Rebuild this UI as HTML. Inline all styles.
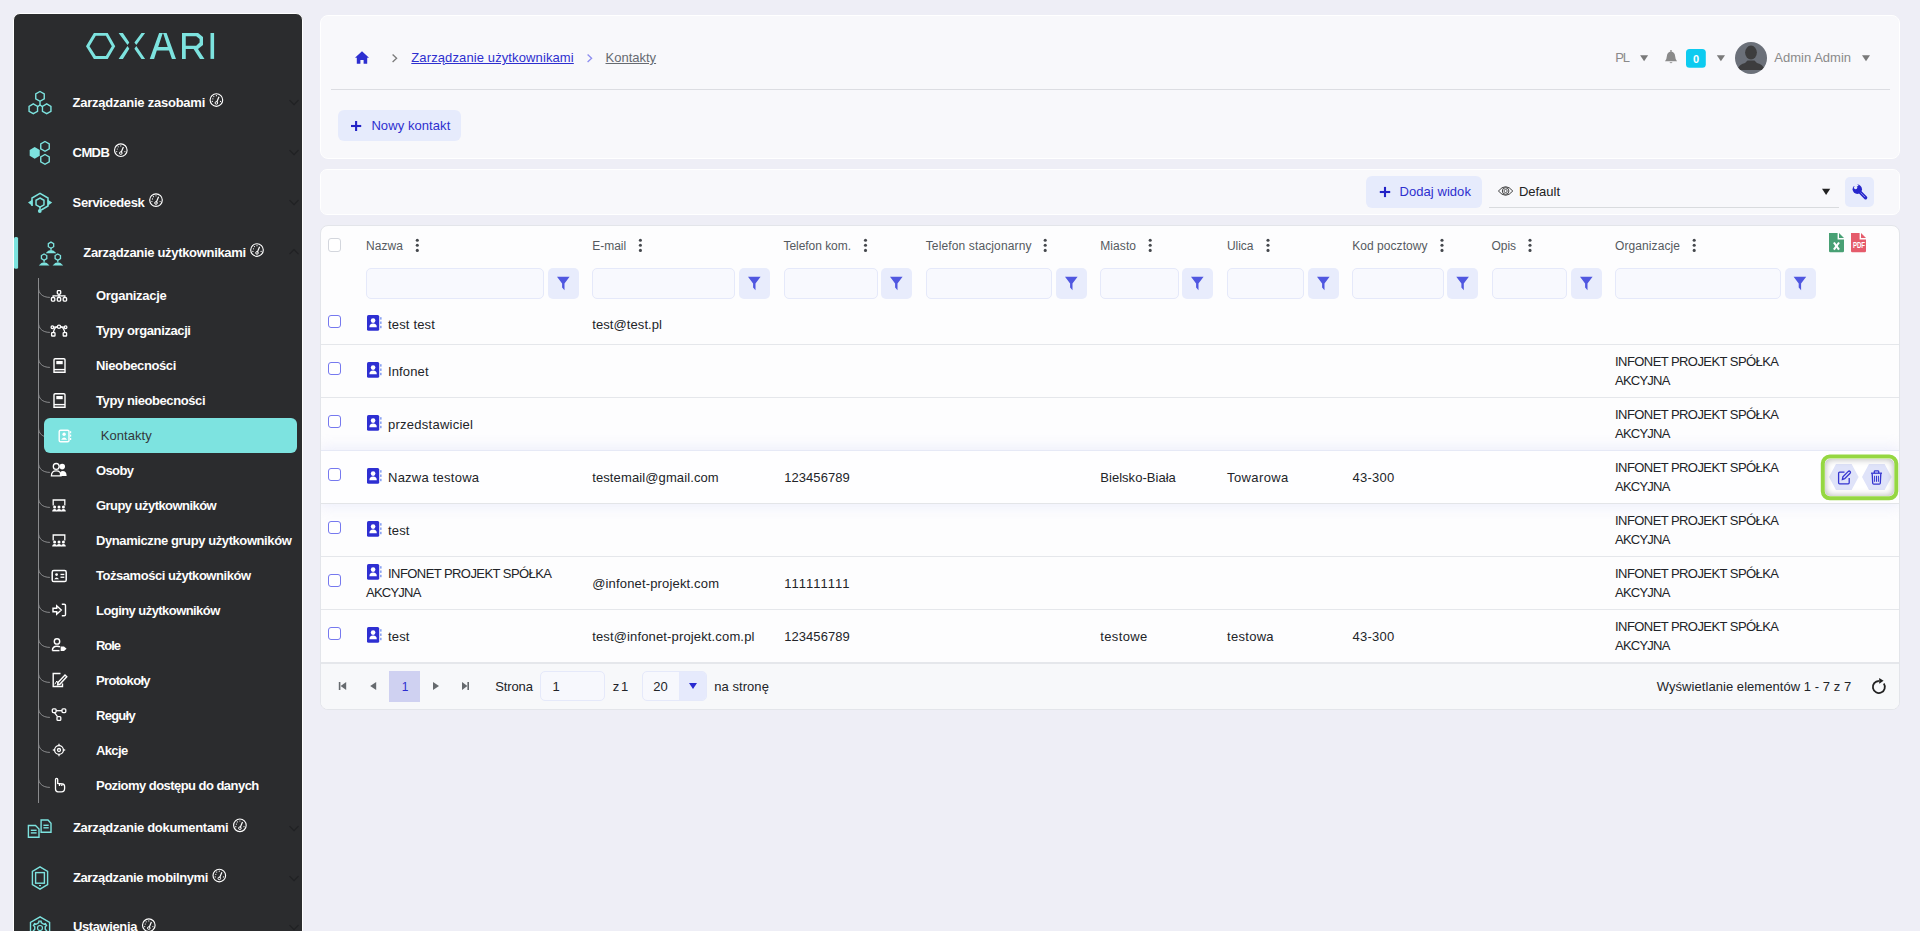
<!DOCTYPE html>
<html><head><meta charset="utf-8">
<style>
*{box-sizing:border-box;margin:0;padding:0}
html,body{width:1920px;height:931px;overflow:hidden;background:#eeeef6;font-family:"Liberation Sans",sans-serif;color:#222;position:relative}
.a{position:absolute}
.tx{position:absolute;white-space:pre;font-family:"Liberation Sans",sans-serif}
svg{position:absolute;overflow:visible}
.card{position:absolute;background:#f8f8fb;border-radius:8px;border:1px solid #fff}
.fin{position:absolute;top:268px;height:31px;background:#f8f9fe;border:1px solid #e5e9fa;border-radius:5px}
.fbtn{position:absolute;top:268px;width:31px;height:31px;background:#e8ecfc;border-radius:5px}
.cb{position:absolute;left:328px;width:13px;height:13px;border:1px solid #7679ef;border-radius:3px;background:#fff}
.dv{position:absolute;left:321px;width:1578px;height:1px;background:#e5e7eb}

</style></head><body>
<div class="a" style="left:13px;top:13px;width:290px;height:960px;background:#2b2c2e;border:1px solid #fff;border-radius:7px"></div>
<svg style="left:80px;top:25px" width="140" height="40" viewBox="0 0 140 40">
<path fill="#7de3df" fill-rule="evenodd" d="M13.9,7.9 L27.7,7.9 L35.2,21.2 L27.7,33.9 L13.9,33.9 L6,21.2 Z M15.8,10.8 L25.9,10.8 L31.8,21.2 L25.9,31 L15.8,31 L9.5,21.2 Z"/>
<path fill="#7de3df" d="M38.6,7.9 L42.9,7.9 L49.3,17.4 L47.5,20 Z M47.5,21 L49.3,23.7 L42.9,33.9 L38.6,33.9 Z M61.5,7.9 L65.1,7.9 L56.3,20 L54.4,17.4 Z M56.3,21 L65.1,33.9 L61.5,33.9 L54.4,23.7 Z"/>
<path fill="#7de3df" fill-rule="evenodd" d="M69.75,33.9 L79.1,8 L86.6,8 L96,33.9 L91.9,33.9 L89,25.4 L76.8,25.4 L74.1,33.9 Z M78.2,21.9 L87.7,21.9 L83.3,8.6 L82.6,8.6 Z"/>
<path fill="#7de3df" fill-rule="evenodd" d="M102,8 L118.1,8 L123,11.9 L123,20 L118,24.1 L124.5,33.9 L120,33.9 L113.6,24.1 L105.75,24.1 L105.75,33.9 L102,33.9 Z M105.75,11.2 L116.2,11.2 L119.6,13.9 L119.6,17.6 L116.2,20.75 L105.75,20.75 Z"/>
<rect x="130.5" y="8" width="3.6" height="25.9" fill="#7de3df"/>
</svg>
<svg style="left:0;top:0" width="80" height="931" viewBox="0 0 80 931">
<g fill="none" stroke="#7de3df" stroke-width="1.4">
<polygon points="40.00,91.50 44.24,93.95 44.24,98.85 40.00,101.30 35.76,98.85 35.76,93.95"/>
<polygon points="33.30,103.90 37.54,106.35 37.54,111.25 33.30,113.70 29.06,111.25 29.06,106.35"/>
<polygon points="46.70,103.90 50.94,106.35 50.94,111.25 46.70,113.70 42.46,111.25 42.46,106.35"/>
<line x1="40" y1="101.3" x2="40" y2="105"/><polyline points="37.6,106.6 40,105 42.4,106.6"/>
<polygon points="45.00,141.50 49.24,143.95 49.24,148.85 45.00,151.30 40.76,148.85 40.76,143.95"/>
<polygon points="45.00,154.50 49.24,156.95 49.24,161.85 45.00,164.30 40.76,161.85 40.76,156.95"/>
</g>
<polygon fill="#7de3df" points="34.70,147.10 39.72,150.00 39.72,155.80 34.70,158.70 29.68,155.80 29.68,150.00"/>
<g fill="none" stroke="#7de3df" stroke-width="1.5">
<polyline points="32,206 32,198 40,193.4 48,198 48,206 41.2,210"/><line x1="40" y1="207" x2="40" y2="209.5"/>
<polygon points="40.00,198.00 43.98,200.30 43.98,204.90 40.00,207.20 36.02,204.90 36.02,200.30"/>
</g>
<g fill="#7de3df">
<path d="M28,202.6 L32.5,199.5 L32.5,206 Z"/>
<path d="M52.2,202.6 L47.5,199.5 L47.5,206 Z"/>
<circle cx="39.8" cy="211" r="1.9"/>
</g>
<g fill="none" stroke="#7de3df" stroke-width="1.3">
<polygon points="51.00,242.10 53.68,243.65 53.68,246.75 51.00,248.30 48.32,246.75 48.32,243.65"/>
<polygon points="44.10,254.00 46.78,255.55 46.78,258.65 44.10,260.20 41.42,258.65 41.42,255.55"/>
<polygon points="57.80,254.00 60.48,255.55 60.48,258.65 57.80,260.20 55.12,258.65 55.12,255.55"/>
</g>
<g fill="#7de3df">
<path d="M45.6,253.2 Q51,246.9 56.4,253.2 Z"/>
<path d="M38.8,265.4 Q44.1,259.1 49.5,265.4 Z"/>
<path d="M52.6,265.4 Q57.8,259.1 63.2,265.4 Z"/>
<rect x="50.4" y="248" width="1.2" height="2"/>
<rect x="43.5" y="260" width="1.2" height="2"/>
<rect x="57.2" y="260" width="1.2" height="2"/>
</g>
<rect x="14" y="236.9" width="4.1" height="31.8" rx="1.5" fill="#7de3df"/>
<!-- documents -->
<g fill="none" stroke="#7de3df" stroke-width="1.4">
<path d="M28.4,825.5 L35.5,825.5 L39,829 L39,837.3 L28.4,837.3 Z"/>
<path d="M41.1,820 L48,820 L51,823.3 L51,832.3 L41.1,832.3 Z"/>
<line x1="30.8" y1="830.3" x2="36.6" y2="830.3"/>
<line x1="30.8" y1="832.9" x2="36.6" y2="832.9"/>
<line x1="43.4" y1="825.3" x2="48.7" y2="825.3"/>
<line x1="43.4" y1="827.8" x2="48.7" y2="827.8"/>
</g>
<!-- mobile -->
<g fill="none" stroke="#7de3df" stroke-width="1.4">
<polygon points="40,866.8 47.6,871.3 47.6,884.6 40,889.1 32.4,884.6 32.4,871.3"/>
<rect x="35.6" y="872.6" width="8.8" height="10.6"/>
</g>
<rect x="39" y="885" width="2" height="1.2" fill="#7de3df"/>
<!-- settings -->
<g fill="none" stroke="#7de3df" stroke-width="1.4">
<polygon points="40.1,916.8 49.6,922.4 49.6,934 40.1,940 30.5,934 30.5,922.4"/>
<circle cx="40" cy="928" r="2.5" stroke-width="1.2"/><polygon points="38.01,923.09 38.74,922.54 38.90,921.09 41.10,921.09 41.26,922.54 41.99,923.09 43.26,923.82 44.10,924.18 45.44,923.59 46.54,925.49 45.36,926.36 45.25,927.26 45.25,928.74 45.36,929.64 46.54,930.51 45.44,932.41 44.10,931.82 43.26,932.18 41.99,932.91 41.26,933.46 41.10,934.91 38.90,934.91 38.74,933.46 38.01,932.91 36.74,932.18 35.90,931.82 34.56,932.41 33.46,930.51 34.64,929.64 34.75,928.74 34.75,927.26 34.64,926.36 33.46,925.49 34.56,923.59 35.90,924.18 36.74,923.82"/>
</g>
</svg>
<svg style="left:0;top:0" width="310" height="931" viewBox="0 0 310 931"><g transform="translate(216.4,100)" fill="none" stroke="#fff">
<circle r="6.3" stroke-width="1.15"/>
<line x1="0.3" y1="2.2" x2="2.6" y2="-3.3" stroke-width="1.2"/>
<circle cx="0" cy="2.9" r="1.3" stroke-width="1"/>
<circle cx="-3.5" cy="-1.2" r="0.6" fill="#fff" stroke="none"/>
<circle cx="-2.6" cy="-3.4" r="0.6" fill="#fff" stroke="none"/>
<circle cx="0" cy="-4.3" r="0.6" fill="#fff" stroke="none"/>
<circle cx="-4.1" cy="1.4" r="0.6" fill="#fff" stroke="none"/>
<circle cx="4.1" cy="1.4" r="0.6" fill="#fff" stroke="none"/>
</g><g transform="translate(120.8,150.2)" fill="none" stroke="#fff">
<circle r="6.3" stroke-width="1.15"/>
<line x1="0.3" y1="2.2" x2="2.6" y2="-3.3" stroke-width="1.2"/>
<circle cx="0" cy="2.9" r="1.3" stroke-width="1"/>
<circle cx="-3.5" cy="-1.2" r="0.6" fill="#fff" stroke="none"/>
<circle cx="-2.6" cy="-3.4" r="0.6" fill="#fff" stroke="none"/>
<circle cx="0" cy="-4.3" r="0.6" fill="#fff" stroke="none"/>
<circle cx="-4.1" cy="1.4" r="0.6" fill="#fff" stroke="none"/>
<circle cx="4.1" cy="1.4" r="0.6" fill="#fff" stroke="none"/>
</g><g transform="translate(156,200.1)" fill="none" stroke="#fff">
<circle r="6.3" stroke-width="1.15"/>
<line x1="0.3" y1="2.2" x2="2.6" y2="-3.3" stroke-width="1.2"/>
<circle cx="0" cy="2.9" r="1.3" stroke-width="1"/>
<circle cx="-3.5" cy="-1.2" r="0.6" fill="#fff" stroke="none"/>
<circle cx="-2.6" cy="-3.4" r="0.6" fill="#fff" stroke="none"/>
<circle cx="0" cy="-4.3" r="0.6" fill="#fff" stroke="none"/>
<circle cx="-4.1" cy="1.4" r="0.6" fill="#fff" stroke="none"/>
<circle cx="4.1" cy="1.4" r="0.6" fill="#fff" stroke="none"/>
</g><g transform="translate(257,250)" fill="none" stroke="#fff">
<circle r="6.3" stroke-width="1.15"/>
<line x1="0.3" y1="2.2" x2="2.6" y2="-3.3" stroke-width="1.2"/>
<circle cx="0" cy="2.9" r="1.3" stroke-width="1"/>
<circle cx="-3.5" cy="-1.2" r="0.6" fill="#fff" stroke="none"/>
<circle cx="-2.6" cy="-3.4" r="0.6" fill="#fff" stroke="none"/>
<circle cx="0" cy="-4.3" r="0.6" fill="#fff" stroke="none"/>
<circle cx="-4.1" cy="1.4" r="0.6" fill="#fff" stroke="none"/>
<circle cx="4.1" cy="1.4" r="0.6" fill="#fff" stroke="none"/>
</g><g transform="translate(239.9,825.3)" fill="none" stroke="#fff">
<circle r="6.3" stroke-width="1.15"/>
<line x1="0.3" y1="2.2" x2="2.6" y2="-3.3" stroke-width="1.2"/>
<circle cx="0" cy="2.9" r="1.3" stroke-width="1"/>
<circle cx="-3.5" cy="-1.2" r="0.6" fill="#fff" stroke="none"/>
<circle cx="-2.6" cy="-3.4" r="0.6" fill="#fff" stroke="none"/>
<circle cx="0" cy="-4.3" r="0.6" fill="#fff" stroke="none"/>
<circle cx="-4.1" cy="1.4" r="0.6" fill="#fff" stroke="none"/>
<circle cx="4.1" cy="1.4" r="0.6" fill="#fff" stroke="none"/>
</g><g transform="translate(219.3,875.5)" fill="none" stroke="#fff">
<circle r="6.3" stroke-width="1.15"/>
<line x1="0.3" y1="2.2" x2="2.6" y2="-3.3" stroke-width="1.2"/>
<circle cx="0" cy="2.9" r="1.3" stroke-width="1"/>
<circle cx="-3.5" cy="-1.2" r="0.6" fill="#fff" stroke="none"/>
<circle cx="-2.6" cy="-3.4" r="0.6" fill="#fff" stroke="none"/>
<circle cx="0" cy="-4.3" r="0.6" fill="#fff" stroke="none"/>
<circle cx="-4.1" cy="1.4" r="0.6" fill="#fff" stroke="none"/>
<circle cx="4.1" cy="1.4" r="0.6" fill="#fff" stroke="none"/>
</g><g transform="translate(148.8,925.2)" fill="none" stroke="#fff">
<circle r="6.3" stroke-width="1.15"/>
<line x1="0.3" y1="2.2" x2="2.6" y2="-3.3" stroke-width="1.2"/>
<circle cx="0" cy="2.9" r="1.3" stroke-width="1"/>
<circle cx="-3.5" cy="-1.2" r="0.6" fill="#fff" stroke="none"/>
<circle cx="-2.6" cy="-3.4" r="0.6" fill="#fff" stroke="none"/>
<circle cx="0" cy="-4.3" r="0.6" fill="#fff" stroke="none"/>
<circle cx="-4.1" cy="1.4" r="0.6" fill="#fff" stroke="none"/>
<circle cx="4.1" cy="1.4" r="0.6" fill="#fff" stroke="none"/>
</g><polyline points="289.5,100.19999999999999 294,104.69999999999999 298.5,100.19999999999999" fill="none" stroke="#202123" stroke-width="1.2"/><polyline points="289.5,150.2 294,154.7 298.5,150.2" fill="none" stroke="#202123" stroke-width="1.2"/><polyline points="289.5,200.2 294,204.7 298.5,200.2" fill="none" stroke="#202123" stroke-width="1.2"/><polyline points="289.5,826.2 294,830.7 298.5,826.2" fill="none" stroke="#202123" stroke-width="1.2"/><polyline points="289.5,876.2 294,880.7 298.5,876.2" fill="none" stroke="#202123" stroke-width="1.2"/><polyline points="289.5,925.2 294,929.7 298.5,925.2" fill="none" stroke="#202123" stroke-width="1.2"/><polyline points="289.5,254.2 294,249.7 298.5,254.2" fill="none" stroke="#202123" stroke-width="1.2"/></svg>
<svg style="left:0;top:0" width="310" height="931" viewBox="0 0 310 931"><line x1="38.5" y1="278" x2="38.5" y2="803" stroke="#8a8b8d" stroke-width="1"/><path d="M38.5,287.8 C38.5,293 42,297.4 49.9,297.4" fill="none" stroke="#8a8b8d" stroke-width="1"/><path d="M38.5,322.8 C38.5,328 42,332.4 49.9,332.4" fill="none" stroke="#8a8b8d" stroke-width="1"/><path d="M38.5,357.8 C38.5,363 42,367.4 49.9,367.4" fill="none" stroke="#8a8b8d" stroke-width="1"/><path d="M38.5,392.8 C38.5,398 42,402.4 49.9,402.4" fill="none" stroke="#8a8b8d" stroke-width="1"/><path d="M38.5,427.8 C38.5,433 42,437.4 49.9,437.4" fill="none" stroke="#8a8b8d" stroke-width="1"/><path d="M38.5,462.8 C38.5,468 42,472.4 49.9,472.4" fill="none" stroke="#8a8b8d" stroke-width="1"/><path d="M38.5,497.8 C38.5,503 42,507.4 49.9,507.4" fill="none" stroke="#8a8b8d" stroke-width="1"/><path d="M38.5,532.8 C38.5,538 42,542.4 49.9,542.4" fill="none" stroke="#8a8b8d" stroke-width="1"/><path d="M38.5,567.8 C38.5,573 42,577.4 49.9,577.4" fill="none" stroke="#8a8b8d" stroke-width="1"/><path d="M38.5,602.8 C38.5,608 42,612.4 49.9,612.4" fill="none" stroke="#8a8b8d" stroke-width="1"/><path d="M38.5,637.8 C38.5,643 42,647.4 49.9,647.4" fill="none" stroke="#8a8b8d" stroke-width="1"/><path d="M38.5,672.8 C38.5,678 42,682.4 49.9,682.4" fill="none" stroke="#8a8b8d" stroke-width="1"/><path d="M38.5,707.8 C38.5,713 42,717.4 49.9,717.4" fill="none" stroke="#8a8b8d" stroke-width="1"/><path d="M38.5,742.8 C38.5,748 42,752.4 49.9,752.4" fill="none" stroke="#8a8b8d" stroke-width="1"/><path d="M38.5,777.8 C38.5,783 42,787.4 49.9,787.4" fill="none" stroke="#8a8b8d" stroke-width="1"/><g fill="none" stroke="#ffffff" stroke-width="1.3">
<rect x="57.3" y="290.7" width="3.4" height="3.4" rx="0.8"/>
<rect x="51.4" y="297.7" width="3.4" height="3.4" rx="0.8"/>
<rect x="57.3" y="297.7" width="3.4" height="3.4" rx="0.8"/>
<rect x="63.2" y="297.7" width="3.4" height="3.4" rx="0.8"/>
<polyline points="53.1,297.7 53.1,295.9 64.9,295.9 64.9,297.7"/>
<line x1="59" y1="294.1" x2="59" y2="297.7"/>
</g><g fill="none" stroke="#ffffff" stroke-width="1.3">
<rect x="51.6" y="332.6" width="3.4" height="3.4" rx="0.6"/>
<rect x="63.2" y="332.6" width="3.4" height="3.4" rx="0.6"/>
<circle cx="52.4" cy="327.2" r="1.3"/>
<circle cx="59" cy="326.8" r="1.6"/>
<circle cx="65.6" cy="327.2" r="1.3"/>
<path d="M53.3,332.6 Q54.5,327 57.5,326.9"/>
<path d="M64.9,332.6 Q63.5,327 60.5,326.9"/>
<line x1="53.7" y1="327.1" x2="57.4" y2="326.9"/>
<line x1="60.6" y1="326.9" x2="64.3" y2="327.1"/>
</g><g fill="none" stroke="#ffffff" stroke-width="1.4">
<path d="M54,372.3 L54,359.8 Q54,358.7 55.1,358.7 L63.9,358.7 Q65,358.7 65,359.8 L65,372.3 Z"/>
<line x1="54" y1="369.6" x2="65" y2="369.6"/>
</g>
<rect x="56.3" y="361" width="6.4" height="3.2" fill="#ffffff"/><g fill="none" stroke="#ffffff" stroke-width="1.4">
<path d="M54,407.3 L54,394.8 Q54,393.7 55.1,393.7 L63.9,393.7 Q65,393.7 65,394.8 L65,407.3 Z"/>
<line x1="54" y1="404.6" x2="65" y2="404.6"/>
</g>
<rect x="56.3" y="396" width="6.4" height="3.2" fill="#ffffff"/><g fill="none" stroke="#ffffff" stroke-width="1.4">
<rect x="59.2" y="430.2" width="9.8" height="11.6" rx="1.4"/>
</g>
<g fill="#ffffff"><circle cx="64.1" cy="434.2" r="1.7"/><path d="M61.1,439.7 Q64.1,435.2 67.1,439.7 Z"/>
<rect x="70" y="431.2" width="1.2" height="2"/><rect x="70" y="434.6" width="1.2" height="2"/><rect x="70" y="438" width="1.2" height="2"/></g><g fill="#ffffff">
<circle cx="56.2" cy="466.4" r="2.9" fill="none" stroke="#ffffff" stroke-width="1.3"/>
<circle cx="62.2" cy="466.6" r="2.8"/>
<path d="M51.4,475.9 Q51.4,470.8 56.2,470.8 Q61,470.8 61,475.9 Z" fill="none" stroke="#ffffff" stroke-width="1.3"/>
<path d="M59.8,476 Q59.6,471 62.6,471 Q66.6,471 66.6,476 Z"/>
</g><g fill="none" stroke="#ffffff" stroke-width="1.3"><polyline points="53.2,505.5 53.2,500 64.8,500 64.8,505.5"/></g>
<g fill="#ffffff">
<circle cx="54.6" cy="506.9" r="1.5"/><circle cx="59" cy="506.9" r="1.5"/><circle cx="63.4" cy="506.9" r="1.5"/>
<path d="M52.2,511.6 Q52.2,508.9 54.6,508.9 Q57,508.9 57,511.6 Z"/>
<path d="M56.6,511.6 Q56.6,508.9 59,508.9 Q61.4,508.9 61.4,511.6 Z"/>
<path d="M61,511.6 Q61,508.9 63.4,508.9 Q65.8,508.9 65.8,511.6 Z"/>
</g><g fill="none" stroke="#ffffff" stroke-width="1.3"><polyline points="53.2,540.5 53.2,535 64.8,535 64.8,540.5"/></g>
<g fill="#ffffff">
<circle cx="54.6" cy="541.9" r="1.5"/><circle cx="59" cy="541.9" r="1.5"/><circle cx="63.4" cy="541.9" r="1.5"/>
<path d="M52.2,546.6 Q52.2,543.9 54.6,543.9 Q57,543.9 57,546.6 Z"/>
<path d="M56.6,546.6 Q56.6,543.9 59,543.9 Q61.4,543.9 61.4,546.6 Z"/>
<path d="M61,546.6 Q61,543.9 63.4,543.9 Q65.8,543.9 65.8,546.6 Z"/>
</g><rect x="52.2" y="570.6" width="14" height="11" rx="1.6" fill="none" stroke="#ffffff" stroke-width="1.5"/>
<g fill="#ffffff"><circle cx="56.6" cy="574.6" r="1.4"/><path d="M54.2,579.2 Q56.6,575.9 59,579.2 Z"/>
<rect x="60.5" y="573.8" width="3.8" height="1.3"/><rect x="60.5" y="576.6" width="3.8" height="1.3"/></g><g fill="none" stroke="#ffffff" stroke-width="1.4">
<path d="M61.8,604.3 L64.2,604.3 Q65.5,604.3 65.5,605.6 L65.5,614.4 Q65.5,615.7 64.2,615.7 L61.8,615.7"/>
<path d="M53,608.3 L56.7,608.3 L56.7,605.8 L61.3,610 L56.7,614.2 L56.7,611.7 L53,611.7 Z"/>
</g><g fill="none" stroke="#ffffff" stroke-width="1.4">
<circle cx="57" cy="641.4" r="2.7"/>
<path d="M52.4,650.6 Q52.4,646.2 57,646.2 Q59,646.2 60,646.8"/>
</g>
<path d="M60.6,646.6 L64,646.6 L66.6,648.8 L64,651 L60.6,651 Z" fill="#ffffff"/>
<line x1="52.3" y1="650.6" x2="59.5" y2="650.6" stroke="#ffffff" stroke-width="1.4"/><g fill="none" stroke="#ffffff" stroke-width="1.4">
<path d="M60.5,673.5 L53.2,673.5 L53.2,686.5 L62.5,686.5 L62.5,683.5"/>
<path d="M58,682.5 L65,675 L66.8,676.8 L59.8,684.3 L57.6,684.8 Z"/>
</g>
<path d="M54.8,684.3 L56.8,681 L58,683.2" fill="none" stroke="#ffffff" stroke-width="1"/><g fill="none" stroke="#ffffff" stroke-width="1.3">
<rect x="52.3" y="708.8" width="3.8" height="3.8" rx="1"/>
<rect x="62" y="708.8" width="3.8" height="3.8" rx="1"/>
<rect x="57" y="716.6" width="3.8" height="3.8" rx="1"/>
<line x1="56.1" y1="710.7" x2="62" y2="710.7"/>
<line x1="54.5" y1="712.6" x2="57.5" y2="716.6"/>
</g><g fill="none" stroke="#ffffff" stroke-width="1.3">
<circle cx="59" cy="750" r="4.4"/>
<circle cx="59" cy="750" r="1.5"/>
<line x1="59" y1="743.8" x2="59" y2="745.6"/><line x1="59" y1="754.4" x2="59" y2="756.2"/>
<line x1="52.8" y1="750" x2="54.6" y2="750"/><line x1="63.4" y1="750" x2="65.2" y2="750"/>
</g><g fill="none" stroke="#ffffff" stroke-width="1.3">
<path d="M55.5,789 L55.5,779.6 Q55.5,778.4 56.6,778.4 Q57.7,778.4 57.7,779.6 L57.7,783.5 L62.5,784 Q64.6,784.3 64.6,786.5 L64.6,788.5 Q64.6,791.8 61.4,791.8 L58,791.8 Q55.5,791.8 55.5,789 Z"/>
<line x1="59.5" y1="784" x2="59.5" y2="786"/><line x1="61.8" y1="784.4" x2="61.8" y2="786"/>
</g></svg>
<div class="a" style="left:44px;top:418px;width:253px;height:35px;background:#7de3e0;border-radius:6px"></div>
<svg style="left:0;top:0" width="310" height="931" viewBox="0 0 310 931">
<g fill="none" stroke="#ffffff" stroke-width="1.4"><rect x="59.2" y="430.2" width="9.8" height="11.6" rx="1.4"/></g>
<g fill="#ffffff"><circle cx="64.1" cy="434.2" r="1.7"/><path d="M61.1,439.7 Q64.1,435.2 67.1,439.7 Z"/>
<rect x="70" y="431.2" width="1.2" height="2"/><rect x="70" y="434.6" width="1.2" height="2"/><rect x="70" y="438" width="1.2" height="2"/></g>
</svg>
<div class="card" style="left:320px;top:15px;width:1580px;height:144px"></div>
<div class="a" style="left:331px;top:89px;width:1559px;height:1px;background:#dcdde2"></div>
<div class="a" style="left:338px;top:110px;width:123px;height:31px;background:#e6ebfc;border-radius:6px"></div>
<div class="card" style="left:320px;top:169px;width:1580px;height:46px;border-radius:7px"></div>
<div class="a" style="left:1366px;top:176px;width:116px;height:32px;background:#e6ebfc;border-radius:6px"></div>
<div class="a" style="left:1489px;top:207px;width:350px;height:1px;background:#d9dbde"></div>
<div class="a" style="left:1845px;top:177px;width:29px;height:30px;background:#e6ebfc;border-radius:5px"></div>
<svg style="left:0;top:0" width="1920" height="240" viewBox="0 0 1920 240">
<path fill="#2d2fd0" d="M355,57.8 L362,51.2 L369,57.8 L367.2,57.8 L367.2,63.8 L363.6,63.8 L363.6,60 L360.4,60 L360.4,63.8 L356.8,63.8 L356.8,57.8 Z"/>
<polyline points="392.6,54.6 396.6,58.3 392.6,62" fill="none" stroke="#7a7a7a" stroke-width="1.3"/>
<polyline points="587.6,54.6 591.6,58.3 587.6,62" fill="none" stroke="#8c8cf0" stroke-width="1.3"/>
<g stroke="#2222c6" stroke-width="2.1"><line x1="351" y1="126" x2="361.2" y2="126"/><line x1="356.1" y1="121" x2="356.1" y2="131"/></g>
<g fill="#7a7a7a"><path d="M1640.1,55.2 L1648.1,55.2 L1644.1,61.2 Z"/><path d="M1716.8,55.2 L1725,55.2 L1720.9,61.2 Z"/><path d="M1862,55.2 L1870,55.2 L1866,61.2 Z"/></g>
<path fill="#8a8a8a" d="M1665,61.3 Q1666.6,59.8 1666.8,56.4 Q1667.1,52.3 1671,51.6 Q1674.9,52.3 1675.2,56.4 Q1675.4,59.8 1677,61.3 Z M1669.4,62.2 Q1671,64.2 1672.6,62.2 Z"/>
<circle cx="1671" cy="50.9" r="0.9" fill="#8a8a8a"/>
<rect x="1686" y="49.1" width="19.8" height="18.7" rx="3.5" fill="#0dcbf0"/>
<defs><clipPath id="av"><circle cx="1751" cy="58" r="16"/></clipPath></defs>
<circle cx="1751" cy="58" r="16" fill="#6b7079"/>
<g clip-path="url(#av)" fill="#3d3d3e"><ellipse cx="1751" cy="52.6" rx="5.9" ry="7"/><path d="M1737.5,70 Q1738.5,64.5 1745,63 L1747.5,60.5 L1754.5,60.5 L1757,63 Q1763.5,64.5 1764.5,70 Z"/></g>
<g stroke="#2222c6" stroke-width="2.1"><line x1="1379.8" y1="192" x2="1390.2" y2="192"/><line x1="1385" y1="186.9" x2="1385" y2="197.1"/></g>
<path d="M1498.4,191 Q1505.6,182.4 1512.8,191 Q1505.6,199.6 1498.4,191 Z" fill="none" stroke="#3a3a3a" stroke-width="0.95"/>
<circle cx="1505.6" cy="191" r="3.3" fill="none" stroke="#3a3a3a" stroke-width="0.95"/><circle cx="1505.6" cy="191" r="1.6" fill="none" stroke="#3a3a3a" stroke-width="0.8"/>
<path d="M1822,188.7 L1830.2,188.7 L1826.1,194.9 Z" fill="#222"/>
<circle cx="1857.3" cy="189.3" r="4.7" fill="#2727cc"/>
<path d="M1855.6,187.6 L1852,184 L1855.5,182.8 L1858.6,185.4 Z" fill="#e6ebfc"/>
<circle cx="1855.6" cy="187.6" r="1.7" fill="#e6ebfc"/>
<line x1="1858.6" y1="190.6" x2="1865.6" y2="197.7" stroke="#2727cc" stroke-width="3.4" stroke-linecap="round"/>
<line x1="1860.6" y1="192.6" x2="1865" y2="197.1" stroke="#8f90e8" stroke-width="0.9"/>
</svg>
<div class="a" style="left:1686px;top:49px;width:20px;height:19px;color:#fff;font-size:11px;font-weight:700;text-align:center;line-height:20px">0</div>
<div class="a" style="left:320px;top:225px;width:1580px;height:485px;background:#fdfdfe;border:1px solid #e3e5ea;border-radius:8px;overflow:hidden"><div class="a" style="left:0;top:436px;width:1578px;height:48px;background:#f7f8fa;border-top:2px solid #e5e7eb"></div><div class="a" style="left:0;top:224px;width:1578px;height:54px;background:#fefeff;box-shadow:0 0 14px 2px rgba(200,205,245,0.32);border-top:1px solid #e6e9f6;border-bottom:1px solid #e3e5e8"></div></div>
<div class="a" style="left:328px;top:237.5px;width:13px;height:14.5px;border:1px solid #d3d6dd;border-radius:3px;background:#fff"></div>
<div class="fin" style="left:366px;width:178.0px"></div>
<div class="fbtn" style="left:548px"></div>
<div class="fin" style="left:592.2px;width:142.8px"></div>
<div class="fbtn" style="left:739px"></div>
<div class="fin" style="left:783.5px;width:94.5px"></div>
<div class="fbtn" style="left:881px"></div>
<div class="fin" style="left:925.5px;width:126.5px"></div>
<div class="fbtn" style="left:1056px"></div>
<div class="fin" style="left:1100.3px;width:78.7px"></div>
<div class="fbtn" style="left:1182px"></div>
<div class="fin" style="left:1227px;width:77.0px"></div>
<div class="fbtn" style="left:1308px"></div>
<div class="fin" style="left:1352px;width:92.0px"></div>
<div class="fbtn" style="left:1447.3px"></div>
<div class="fin" style="left:1491.6px;width:75.4px"></div>
<div class="fbtn" style="left:1571px"></div>
<div class="fin" style="left:1615px;width:165.5px"></div>
<div class="fbtn" style="left:1784.6px"></div>
<svg style="left:0;top:0" width="1920" height="320" viewBox="0 0 1920 320"><path fill="#5057e0" d="M557.0,276.8 L569.5999999999999,276.8 L564.5,283.4 L564.5,290.2 L562.0999999999999,287.6 L562.0999999999999,283.4 Z"/><path fill="#5057e0" d="M748.0,276.8 L760.5999999999999,276.8 L755.5,283.4 L755.5,290.2 L753.0999999999999,287.6 L753.0999999999999,283.4 Z"/><path fill="#5057e0" d="M890.0,276.8 L902.5999999999999,276.8 L897.5,283.4 L897.5,290.2 L895.0999999999999,287.6 L895.0999999999999,283.4 Z"/><path fill="#5057e0" d="M1065.0,276.8 L1077.6,276.8 L1072.5,283.4 L1072.5,290.2 L1070.1,287.6 L1070.1,283.4 Z"/><path fill="#5057e0" d="M1191.0,276.8 L1203.6,276.8 L1198.5,283.4 L1198.5,290.2 L1196.1,287.6 L1196.1,283.4 Z"/><path fill="#5057e0" d="M1317.0,276.8 L1329.6,276.8 L1324.5,283.4 L1324.5,290.2 L1322.1,287.6 L1322.1,283.4 Z"/><path fill="#5057e0" d="M1456.3,276.8 L1468.8999999999999,276.8 L1463.8,283.4 L1463.8,290.2 L1461.3999999999999,287.6 L1461.3999999999999,283.4 Z"/><path fill="#5057e0" d="M1580.0,276.8 L1592.6,276.8 L1587.5,283.4 L1587.5,290.2 L1585.1,287.6 L1585.1,283.4 Z"/><path fill="#5057e0" d="M1793.6,276.8 L1806.1999999999998,276.8 L1801.1,283.4 L1801.1,290.2 L1798.6999999999998,287.6 L1798.6999999999998,283.4 Z"/><circle cx="417.3" cy="240.2" r="1.55" fill="#45484d"/><circle cx="417.3" cy="245.3" r="1.55" fill="#45484d"/><circle cx="417.3" cy="250.4" r="1.55" fill="#45484d"/><circle cx="640.4" cy="240.2" r="1.55" fill="#45484d"/><circle cx="640.4" cy="245.3" r="1.55" fill="#45484d"/><circle cx="640.4" cy="250.4" r="1.55" fill="#45484d"/><circle cx="865.5" cy="240.2" r="1.55" fill="#45484d"/><circle cx="865.5" cy="245.3" r="1.55" fill="#45484d"/><circle cx="865.5" cy="250.4" r="1.55" fill="#45484d"/><circle cx="1045.2" cy="240.2" r="1.55" fill="#45484d"/><circle cx="1045.2" cy="245.3" r="1.55" fill="#45484d"/><circle cx="1045.2" cy="250.4" r="1.55" fill="#45484d"/><circle cx="1150.2" cy="240.2" r="1.55" fill="#45484d"/><circle cx="1150.2" cy="245.3" r="1.55" fill="#45484d"/><circle cx="1150.2" cy="250.4" r="1.55" fill="#45484d"/><circle cx="1268" cy="240.2" r="1.55" fill="#45484d"/><circle cx="1268" cy="245.3" r="1.55" fill="#45484d"/><circle cx="1268" cy="250.4" r="1.55" fill="#45484d"/><circle cx="1442" cy="240.2" r="1.55" fill="#45484d"/><circle cx="1442" cy="245.3" r="1.55" fill="#45484d"/><circle cx="1442" cy="250.4" r="1.55" fill="#45484d"/><circle cx="1530" cy="240.2" r="1.55" fill="#45484d"/><circle cx="1530" cy="245.3" r="1.55" fill="#45484d"/><circle cx="1530" cy="250.4" r="1.55" fill="#45484d"/><circle cx="1694.2" cy="240.2" r="1.55" fill="#45484d"/><circle cx="1694.2" cy="245.3" r="1.55" fill="#45484d"/><circle cx="1694.2" cy="250.4" r="1.55" fill="#45484d"/><path fill="#48a074" d="M1829,233 L1837.6,233 L1837.6,239.4 L1844,239.4 L1844,250.9 Q1844,252.2 1842.7,252.2 L1830.3,252.2 Q1829,252.2 1829,250.9 Z"/>
<path fill="#48a074" d="M1839,233 L1844,238 L1839,238 Z"/>
<g stroke="#fff" stroke-width="2.1"><line x1="1833.9" y1="242.5" x2="1839" y2="249.6"/><line x1="1839" y1="242.5" x2="1833.9" y2="249.6"/></g>
<path fill="#e55b6b" d="M1851,233 L1859.6,233 L1859.6,239.4 L1866,239.4 L1866,250.9 Q1866,252.2 1864.7,252.2 L1852.3,252.2 Q1851,252.2 1851,250.9 Z"/>
<path fill="#e55b6b" d="M1861,233 L1866,238 L1861,238 Z"/>
<text x="1852.9" y="247.5" font-family="Liberation Sans" font-weight="700" font-size="8.6" fill="#fff" textLength="12.2" lengthAdjust="spacingAndGlyphs">PDF</text></svg>
<div class="dv" style="top:344px"></div>
<div class="dv" style="top:397px"></div>
<div class="dv" style="top:556px"></div>
<div class="dv" style="top:609px"></div>
<div class="cb" style="top:315px"></div>
<div class="cb" style="top:362px"></div>
<div class="cb" style="top:415px"></div>
<div class="cb" style="top:468px"></div>
<div class="cb" style="top:521px"></div>
<div class="cb" style="top:574px"></div>
<div class="cb" style="top:627px"></div>
<svg style="left:0;top:0" width="1920" height="931" viewBox="0 0 1920 931"><rect x="367" y="315" width="12.2" height="15.8" rx="1.6" fill="#2e2fd2"/>
<circle cx="373.1" cy="320.6" r="2.3" fill="#fff"/>
<path d="M369.4,327.2 Q369.4,323.6 373.1,323.6 Q376.8,323.6 376.8,327.2 Z" fill="#fff"/>
<g fill="#6f8df0"><rect x="380.2" y="317.2" width="1.3" height="2.4"/><rect x="380.2" y="321.5" width="1.3" height="2.4"/><rect x="380.2" y="325.8" width="1.3" height="2.4"/></g><rect x="367" y="362" width="12.2" height="15.8" rx="1.6" fill="#2e2fd2"/>
<circle cx="373.1" cy="367.6" r="2.3" fill="#fff"/>
<path d="M369.4,374.2 Q369.4,370.6 373.1,370.6 Q376.8,370.6 376.8,374.2 Z" fill="#fff"/>
<g fill="#6f8df0"><rect x="380.2" y="364.2" width="1.3" height="2.4"/><rect x="380.2" y="368.5" width="1.3" height="2.4"/><rect x="380.2" y="372.8" width="1.3" height="2.4"/></g><rect x="367" y="415" width="12.2" height="15.8" rx="1.6" fill="#2e2fd2"/>
<circle cx="373.1" cy="420.6" r="2.3" fill="#fff"/>
<path d="M369.4,427.2 Q369.4,423.6 373.1,423.6 Q376.8,423.6 376.8,427.2 Z" fill="#fff"/>
<g fill="#6f8df0"><rect x="380.2" y="417.2" width="1.3" height="2.4"/><rect x="380.2" y="421.5" width="1.3" height="2.4"/><rect x="380.2" y="425.8" width="1.3" height="2.4"/></g><rect x="367" y="468" width="12.2" height="15.8" rx="1.6" fill="#2e2fd2"/>
<circle cx="373.1" cy="473.6" r="2.3" fill="#fff"/>
<path d="M369.4,480.2 Q369.4,476.6 373.1,476.6 Q376.8,476.6 376.8,480.2 Z" fill="#fff"/>
<g fill="#6f8df0"><rect x="380.2" y="470.2" width="1.3" height="2.4"/><rect x="380.2" y="474.5" width="1.3" height="2.4"/><rect x="380.2" y="478.8" width="1.3" height="2.4"/></g><rect x="367" y="521" width="12.2" height="15.8" rx="1.6" fill="#2e2fd2"/>
<circle cx="373.1" cy="526.6" r="2.3" fill="#fff"/>
<path d="M369.4,533.2 Q369.4,529.6 373.1,529.6 Q376.8,529.6 376.8,533.2 Z" fill="#fff"/>
<g fill="#6f8df0"><rect x="380.2" y="523.2" width="1.3" height="2.4"/><rect x="380.2" y="527.5" width="1.3" height="2.4"/><rect x="380.2" y="531.8" width="1.3" height="2.4"/></g><rect x="367" y="564" width="12.2" height="15.8" rx="1.6" fill="#2e2fd2"/>
<circle cx="373.1" cy="569.6" r="2.3" fill="#fff"/>
<path d="M369.4,576.2 Q369.4,572.6 373.1,572.6 Q376.8,572.6 376.8,576.2 Z" fill="#fff"/>
<g fill="#6f8df0"><rect x="380.2" y="566.2" width="1.3" height="2.4"/><rect x="380.2" y="570.5" width="1.3" height="2.4"/><rect x="380.2" y="574.8" width="1.3" height="2.4"/></g><rect x="367" y="627" width="12.2" height="15.8" rx="1.6" fill="#2e2fd2"/>
<circle cx="373.1" cy="632.6" r="2.3" fill="#fff"/>
<path d="M369.4,639.2 Q369.4,635.6 373.1,635.6 Q376.8,635.6 376.8,639.2 Z" fill="#fff"/>
<g fill="#6f8df0"><rect x="380.2" y="629.2" width="1.3" height="2.4"/><rect x="380.2" y="633.5" width="1.3" height="2.4"/><rect x="380.2" y="637.8" width="1.3" height="2.4"/></g><rect x="1822.8" y="456.5" width="73.5" height="41.8" rx="7" fill="#fff" stroke="#95d742" stroke-width="4"/>
<polygon points="1829,477 1836,464 1851.6,464 1858.6,477 1851.6,490 1836,490" fill="#dfe3f9"/>
<polygon points="1862,477 1869,464 1884.6,464 1891.6,477 1884.6,490 1869,490" fill="#dfe3f9"/>
<g fill="none" stroke="#3535d0" stroke-width="1.3">
<path d="M1844.5,472.2 L1839.6,472.2 Q1838.6,472.2 1838.6,473.2 L1838.6,482.8 Q1838.6,483.8 1839.6,483.8 L1848.2,483.8 Q1849.2,483.8 1849.2,482.8 L1849.2,478"/>
<path d="M1842.4,479.4 L1842.9,476.8 L1848.3,471.4 Q1849.2,470.6 1850.1,471.4 Q1850.9,472.3 1850.1,473.2 L1844.7,478.6 Z"/>
<path d="M1871,473.2 L1882,473.2"/>
<path d="M1874.3,473.2 L1874.3,471.6 Q1874.3,470.8 1875.1,470.8 L1877.9,470.8 Q1878.7,470.8 1878.7,471.6 L1878.7,473.2"/>
<path d="M1872.2,473.6 L1872.7,483.2 Q1872.8,484.1 1873.7,484.1 L1879.3,484.1 Q1880.2,484.1 1880.3,483.2 L1880.8,473.6"/>
<line x1="1874.6" y1="475.8" x2="1874.6" y2="481.8" stroke-width="1"/><line x1="1876.5" y1="475.8" x2="1876.5" y2="481.8" stroke-width="1"/><line x1="1878.4" y1="475.8" x2="1878.4" y2="481.8" stroke-width="1"/>
</g></svg>
<div class="a" style="left:1825px;top:459px;width:69px;height:37px;border-radius:5px;box-shadow:inset 0 0 7px rgba(0,0,0,0.32);pointer-events:none"></div>
<div class="a" style="left:389px;top:671px;width:31px;height:31px;background:#cfd1f1"></div>
<div class="a" style="left:540.3px;top:671.3px;width:64.5px;height:30.2px;background:#f7f8fd;border:1px solid #e5e9fa;border-radius:5px"></div>
<div class="a" style="left:642.3px;top:671.3px;width:64.4px;height:30.2px;background:#f7f8fd;border:1px solid #e5e9fa;border-radius:5px;overflow:hidden"><div class="a" style="left:36px;top:0;width:28px;height:30px;background:#e6eafc"></div></div>
<svg style="left:0;top:0" width="1920" height="931" viewBox="0 0 1920 931">
<g fill="#666a6e">
<rect x="338.8" y="682" width="1.6" height="8"/><path d="M346.2,682 L346.2,690 L340.6,686 Z"/>
<path d="M376.2,682 L376.2,690 L370.2,686 Z"/>
<path d="M433,682 L433,690 L439,686 Z"/>
<path d="M462,682 L462,690 L467.4,686 Z"/><rect x="467.4" y="682" width="1.6" height="8"/>
</g>
<path d="M689,683 L697,683 L693,689 Z" fill="#2a2ad0"/>
<path d="M1883.8,683.6 A6,6 0 1 1 1878.9,681" fill="none" stroke="#222" stroke-width="1.8"/>
<path d="M1879.2,677.9 L1883.6,680.8 L1879.2,683.8 Z" fill="#222"/>
</svg>
<div class="tx" style="left:72.6px;top:95.00px;font-size:13px;line-height:15px;font-weight:700;color:#fdfdfd;letter-spacing:-0.241px;">Zarządzanie zasobami</div>
<div class="tx" style="left:72.6px;top:145.00px;font-size:13px;line-height:15px;font-weight:700;color:#fdfdfd;letter-spacing:-0.600px;">CMDB</div>
<div class="tx" style="left:72.6px;top:195.00px;font-size:13px;line-height:15px;font-weight:700;color:#fdfdfd;letter-spacing:-0.371px;">Servicedesk</div>
<div class="tx" style="left:83.3px;top:244.60px;font-size:13px;line-height:15px;font-weight:700;color:#fdfdfd;letter-spacing:-0.321px;">Zarządzanie użytkownikami</div>
<div class="tx" style="left:96.0px;top:288.40px;font-size:13px;line-height:15px;font-weight:700;color:#fdfdfd;letter-spacing:-0.300px;">Organizacje</div>
<div class="tx" style="left:96.0px;top:323.40px;font-size:13px;line-height:15px;font-weight:700;color:#fdfdfd;letter-spacing:-0.394px;">Typy organizacji</div>
<div class="tx" style="left:96.0px;top:358.40px;font-size:13px;line-height:15px;font-weight:700;color:#fdfdfd;letter-spacing:-0.385px;">Nieobecności</div>
<div class="tx" style="left:96.0px;top:393.40px;font-size:13px;line-height:15px;font-weight:700;color:#fdfdfd;letter-spacing:-0.411px;">Typy nieobecności</div>
<div class="tx" style="left:100.7px;top:428.40px;font-size:13px;line-height:15px;font-weight:400;color:#33383b;letter-spacing:0.058px;">Kontakty</div>
<div class="tx" style="left:96.0px;top:463.40px;font-size:13px;line-height:15px;font-weight:700;color:#fdfdfd;letter-spacing:-0.617px;">Osoby</div>
<div class="tx" style="left:96.0px;top:498.40px;font-size:13px;line-height:15px;font-weight:700;color:#fdfdfd;letter-spacing:-0.548px;">Grupy użytkowników</div>
<div class="tx" style="left:96.0px;top:533.40px;font-size:13px;line-height:15px;font-weight:700;color:#fdfdfd;letter-spacing:-0.412px;">Dynamiczne grupy użytkowników</div>
<div class="tx" style="left:96.0px;top:568.40px;font-size:13px;line-height:15px;font-weight:700;color:#fdfdfd;letter-spacing:-0.463px;">Tożsamości użytkowników</div>
<div class="tx" style="left:96.0px;top:603.40px;font-size:13px;line-height:15px;font-weight:700;color:#fdfdfd;letter-spacing:-0.558px;">Loginy użytkowników</div>
<div class="tx" style="left:96.0px;top:638.40px;font-size:13px;line-height:15px;font-weight:700;color:#fdfdfd;letter-spacing:-1.057px;">Role</div>
<div class="tx" style="left:96.0px;top:673.40px;font-size:13px;line-height:15px;font-weight:700;color:#fdfdfd;letter-spacing:-0.671px;">Protokoły</div>
<div class="tx" style="left:96.0px;top:708.40px;font-size:13px;line-height:15px;font-weight:700;color:#fdfdfd;letter-spacing:-0.729px;">Reguły</div>
<div class="tx" style="left:96.0px;top:743.40px;font-size:13px;line-height:15px;font-weight:700;color:#fdfdfd;letter-spacing:-0.626px;">Akcje</div>
<div class="tx" style="left:96.0px;top:778.40px;font-size:13px;line-height:15px;font-weight:700;color:#fdfdfd;letter-spacing:-0.540px;">Poziomy dostępu do danych</div>
<div class="tx" style="left:72.9px;top:819.50px;font-size:13px;line-height:15px;font-weight:700;color:#fdfdfd;letter-spacing:-0.307px;">Zarządzanie dokumentami</div>
<div class="tx" style="left:72.9px;top:869.80px;font-size:13px;line-height:15px;font-weight:700;color:#fdfdfd;letter-spacing:-0.377px;">Zarządzanie mobilnymi</div>
<div class="tx" style="left:72.9px;top:918.50px;font-size:13px;line-height:15px;font-weight:700;color:#fdfdfd;letter-spacing:-0.380px;">Ustawienia</div>
<div class="tx" style="left:411.3px;top:50.00px;font-size:13px;line-height:15px;font-weight:400;color:#2e2fcf;letter-spacing:0.113px;text-decoration:underline;text-underline-offset:1px">Zarządzanie użytkownikami</div>
<div class="tx" style="left:605.5px;top:50.00px;font-size:13px;line-height:15px;font-weight:400;color:#666a70;letter-spacing:0.001px;text-decoration:underline;text-underline-offset:1px">Kontakty</div>
<div class="tx" style="left:371.4px;top:118.00px;font-size:13px;line-height:15px;font-weight:400;color:#2e2fcf;letter-spacing:0.078px;">Nowy kontakt</div>
<div class="tx" style="left:1615.3px;top:50.00px;font-size:13px;line-height:15px;font-weight:400;color:#8a8a8a;letter-spacing:-1.306px;">PL</div>
<div class="tx" style="left:1774.3px;top:50.00px;font-size:13px;line-height:15px;font-weight:400;color:#8a8a8a;letter-spacing:0.021px;">Admin Admin</div>
<div class="tx" style="left:1399.6px;top:184.00px;font-size:13px;line-height:15px;font-weight:400;color:#2e2fcf;letter-spacing:0.047px;">Dodaj widok</div>
<div class="tx" style="left:1518.9px;top:184.00px;font-size:13px;line-height:15px;font-weight:400;color:#222;letter-spacing:0.000px;">Default</div>
<div class="tx" style="left:366.0px;top:238.84px;font-size:12px;line-height:14px;font-weight:400;color:#555a60;letter-spacing:0.078px;">Nazwa</div>
<div class="tx" style="left:592.2px;top:238.84px;font-size:12px;line-height:14px;font-weight:400;color:#555a60;letter-spacing:-0.003px;">E-mail</div>
<div class="tx" style="left:783.5px;top:238.84px;font-size:12px;line-height:14px;font-weight:400;color:#555a60;letter-spacing:-0.050px;">Telefon kom.</div>
<div class="tx" style="left:925.7px;top:238.84px;font-size:12px;line-height:14px;font-weight:400;color:#555a60;letter-spacing:0.133px;">Telefon stacjonarny</div>
<div class="tx" style="left:1100.3px;top:238.84px;font-size:12px;line-height:14px;font-weight:400;color:#555a60;letter-spacing:0.071px;">Miasto</div>
<div class="tx" style="left:1227.0px;top:238.84px;font-size:12px;line-height:14px;font-weight:400;color:#555a60;letter-spacing:-0.068px;">Ulica</div>
<div class="tx" style="left:1352.2px;top:238.84px;font-size:12px;line-height:14px;font-weight:400;color:#555a60;letter-spacing:0.053px;">Kod pocztowy</div>
<div class="tx" style="left:1491.6px;top:238.84px;font-size:12px;line-height:14px;font-weight:400;color:#555a60;letter-spacing:-0.096px;">Opis</div>
<div class="tx" style="left:1615.0px;top:238.84px;font-size:12px;line-height:14px;font-weight:400;color:#555a60;letter-spacing:0.097px;">Organizacje</div>
<div class="tx" style="left:388.0px;top:317.20px;font-size:13px;line-height:15px;font-weight:400;color:#222428;letter-spacing:0.171px;">test test</div>
<div class="tx" style="left:592.2px;top:317.20px;font-size:13px;line-height:15px;font-weight:400;color:#222428;letter-spacing:0.087px;">test@test.pl</div>
<div class="tx" style="left:388.0px;top:364.00px;font-size:13px;line-height:15px;font-weight:400;color:#222428;letter-spacing:0.139px;">Infonet</div>
<div class="tx" style="left:1615.0px;top:354.40px;font-size:13px;line-height:15px;font-weight:400;color:#222428;letter-spacing:-0.562px;">INFONET PROJEKT SPÓŁKA</div>
<div class="tx" style="left:1615.0px;top:372.60px;font-size:13px;line-height:15px;font-weight:400;color:#222428;letter-spacing:-0.761px;">AKCYJNA</div>
<div class="tx" style="left:388.0px;top:417.00px;font-size:13px;line-height:15px;font-weight:400;color:#222428;letter-spacing:0.257px;">przedstawiciel</div>
<div class="tx" style="left:1615.0px;top:407.40px;font-size:13px;line-height:15px;font-weight:400;color:#222428;letter-spacing:-0.562px;">INFONET PROJEKT SPÓŁKA</div>
<div class="tx" style="left:1615.0px;top:425.60px;font-size:13px;line-height:15px;font-weight:400;color:#222428;letter-spacing:-0.761px;">AKCYJNA</div>
<div class="tx" style="left:388.0px;top:470.00px;font-size:13px;line-height:15px;font-weight:400;color:#222428;letter-spacing:0.237px;">Nazwa testowa</div>
<div class="tx" style="left:592.2px;top:470.00px;font-size:13px;line-height:15px;font-weight:400;color:#222428;letter-spacing:0.114px;">testemail@gmail.com</div>
<div class="tx" style="left:784.2px;top:470.00px;font-size:13px;line-height:15px;font-weight:400;color:#222428;letter-spacing:0.065px;">123456789</div>
<div class="tx" style="left:1100.3px;top:470.00px;font-size:13px;line-height:15px;font-weight:400;color:#222428;letter-spacing:0.029px;">Bielsko-Biała</div>
<div class="tx" style="left:1227.0px;top:470.00px;font-size:13px;line-height:15px;font-weight:400;color:#222428;letter-spacing:0.396px;">Towarowa</div>
<div class="tx" style="left:1352.5px;top:470.00px;font-size:13px;line-height:15px;font-weight:400;color:#222428;letter-spacing:0.243px;">43-300</div>
<div class="tx" style="left:1615.0px;top:460.40px;font-size:13px;line-height:15px;font-weight:400;color:#222428;letter-spacing:-0.562px;">INFONET PROJEKT SPÓŁKA</div>
<div class="tx" style="left:1615.0px;top:478.60px;font-size:13px;line-height:15px;font-weight:400;color:#222428;letter-spacing:-0.761px;">AKCYJNA</div>
<div class="tx" style="left:388.0px;top:523.00px;font-size:13px;line-height:15px;font-weight:400;color:#222428;letter-spacing:0.177px;">test</div>
<div class="tx" style="left:1615.0px;top:513.40px;font-size:13px;line-height:15px;font-weight:400;color:#222428;letter-spacing:-0.562px;">INFONET PROJEKT SPÓŁKA</div>
<div class="tx" style="left:1615.0px;top:531.60px;font-size:13px;line-height:15px;font-weight:400;color:#222428;letter-spacing:-0.761px;">AKCYJNA</div>
<div class="tx" style="left:592.2px;top:576.00px;font-size:13px;line-height:15px;font-weight:400;color:#222428;letter-spacing:0.161px;">@infonet-projekt.com</div>
<div class="tx" style="left:784.2px;top:576.00px;font-size:13px;line-height:15px;font-weight:400;color:#222428;letter-spacing:0.980px;">111111111</div>
<div class="tx" style="left:1615.0px;top:566.40px;font-size:13px;line-height:15px;font-weight:400;color:#222428;letter-spacing:-0.562px;">INFONET PROJEKT SPÓŁKA</div>
<div class="tx" style="left:1615.0px;top:584.60px;font-size:13px;line-height:15px;font-weight:400;color:#222428;letter-spacing:-0.761px;">AKCYJNA</div>
<div class="tx" style="left:388.0px;top:629.00px;font-size:13px;line-height:15px;font-weight:400;color:#222428;letter-spacing:0.177px;">test</div>
<div class="tx" style="left:592.2px;top:629.00px;font-size:13px;line-height:15px;font-weight:400;color:#222428;letter-spacing:0.145px;">test@infonet-projekt.com.pl</div>
<div class="tx" style="left:784.2px;top:629.00px;font-size:13px;line-height:15px;font-weight:400;color:#222428;letter-spacing:0.065px;">123456789</div>
<div class="tx" style="left:1100.3px;top:629.00px;font-size:13px;line-height:15px;font-weight:400;color:#222428;letter-spacing:0.348px;">testowe</div>
<div class="tx" style="left:1227.0px;top:629.00px;font-size:13px;line-height:15px;font-weight:400;color:#222428;letter-spacing:0.298px;">testowa</div>
<div class="tx" style="left:1352.5px;top:629.00px;font-size:13px;line-height:15px;font-weight:400;color:#222428;letter-spacing:0.243px;">43-300</div>
<div class="tx" style="left:1615.0px;top:619.40px;font-size:13px;line-height:15px;font-weight:400;color:#222428;letter-spacing:-0.562px;">INFONET PROJEKT SPÓŁKA</div>
<div class="tx" style="left:1615.0px;top:637.60px;font-size:13px;line-height:15px;font-weight:400;color:#222428;letter-spacing:-0.761px;">AKCYJNA</div>
<div class="tx" style="left:388.0px;top:566.40px;font-size:13px;line-height:15px;font-weight:400;color:#222428;letter-spacing:-0.562px;">INFONET PROJEKT SPÓŁKA</div>
<div class="tx" style="left:366.0px;top:584.60px;font-size:13px;line-height:15px;font-weight:400;color:#222428;letter-spacing:-0.761px;">AKCYJNA</div>
<div class="tx" style="left:401.8px;top:679.84px;font-size:12px;line-height:14px;font-weight:400;color:#2b2bd0;letter-spacing:0.000px;font-family:"Liberation Serif",serif">1</div>
<div class="tx" style="left:495.2px;top:679.30px;font-size:13px;line-height:15px;font-weight:400;color:#222428;letter-spacing:-0.103px;">Strona</div>
<div class="tx" style="left:552.5px;top:679.30px;font-size:13px;line-height:15px;font-weight:400;color:#222428;letter-spacing:0.000px;">1</div>
<div class="tx" style="left:612.7px;top:679.30px;font-size:13px;line-height:15px;font-weight:400;color:#222428;letter-spacing:-0.872px;">z 1</div>
<div class="tx" style="left:653.3px;top:679.30px;font-size:13px;line-height:15px;font-weight:400;color:#222428;letter-spacing:0.000px;">20</div>
<div class="tx" style="left:714.2px;top:679.30px;font-size:13px;line-height:15px;font-weight:400;color:#222428;letter-spacing:0.062px;">na stronę</div>
<div class="tx" style="left:1656.8px;top:679.30px;font-size:13px;line-height:15px;font-weight:400;color:#222428;letter-spacing:0.054px;">Wyświetlanie elementów 1 - 7 z 7</div>
</body></html>
